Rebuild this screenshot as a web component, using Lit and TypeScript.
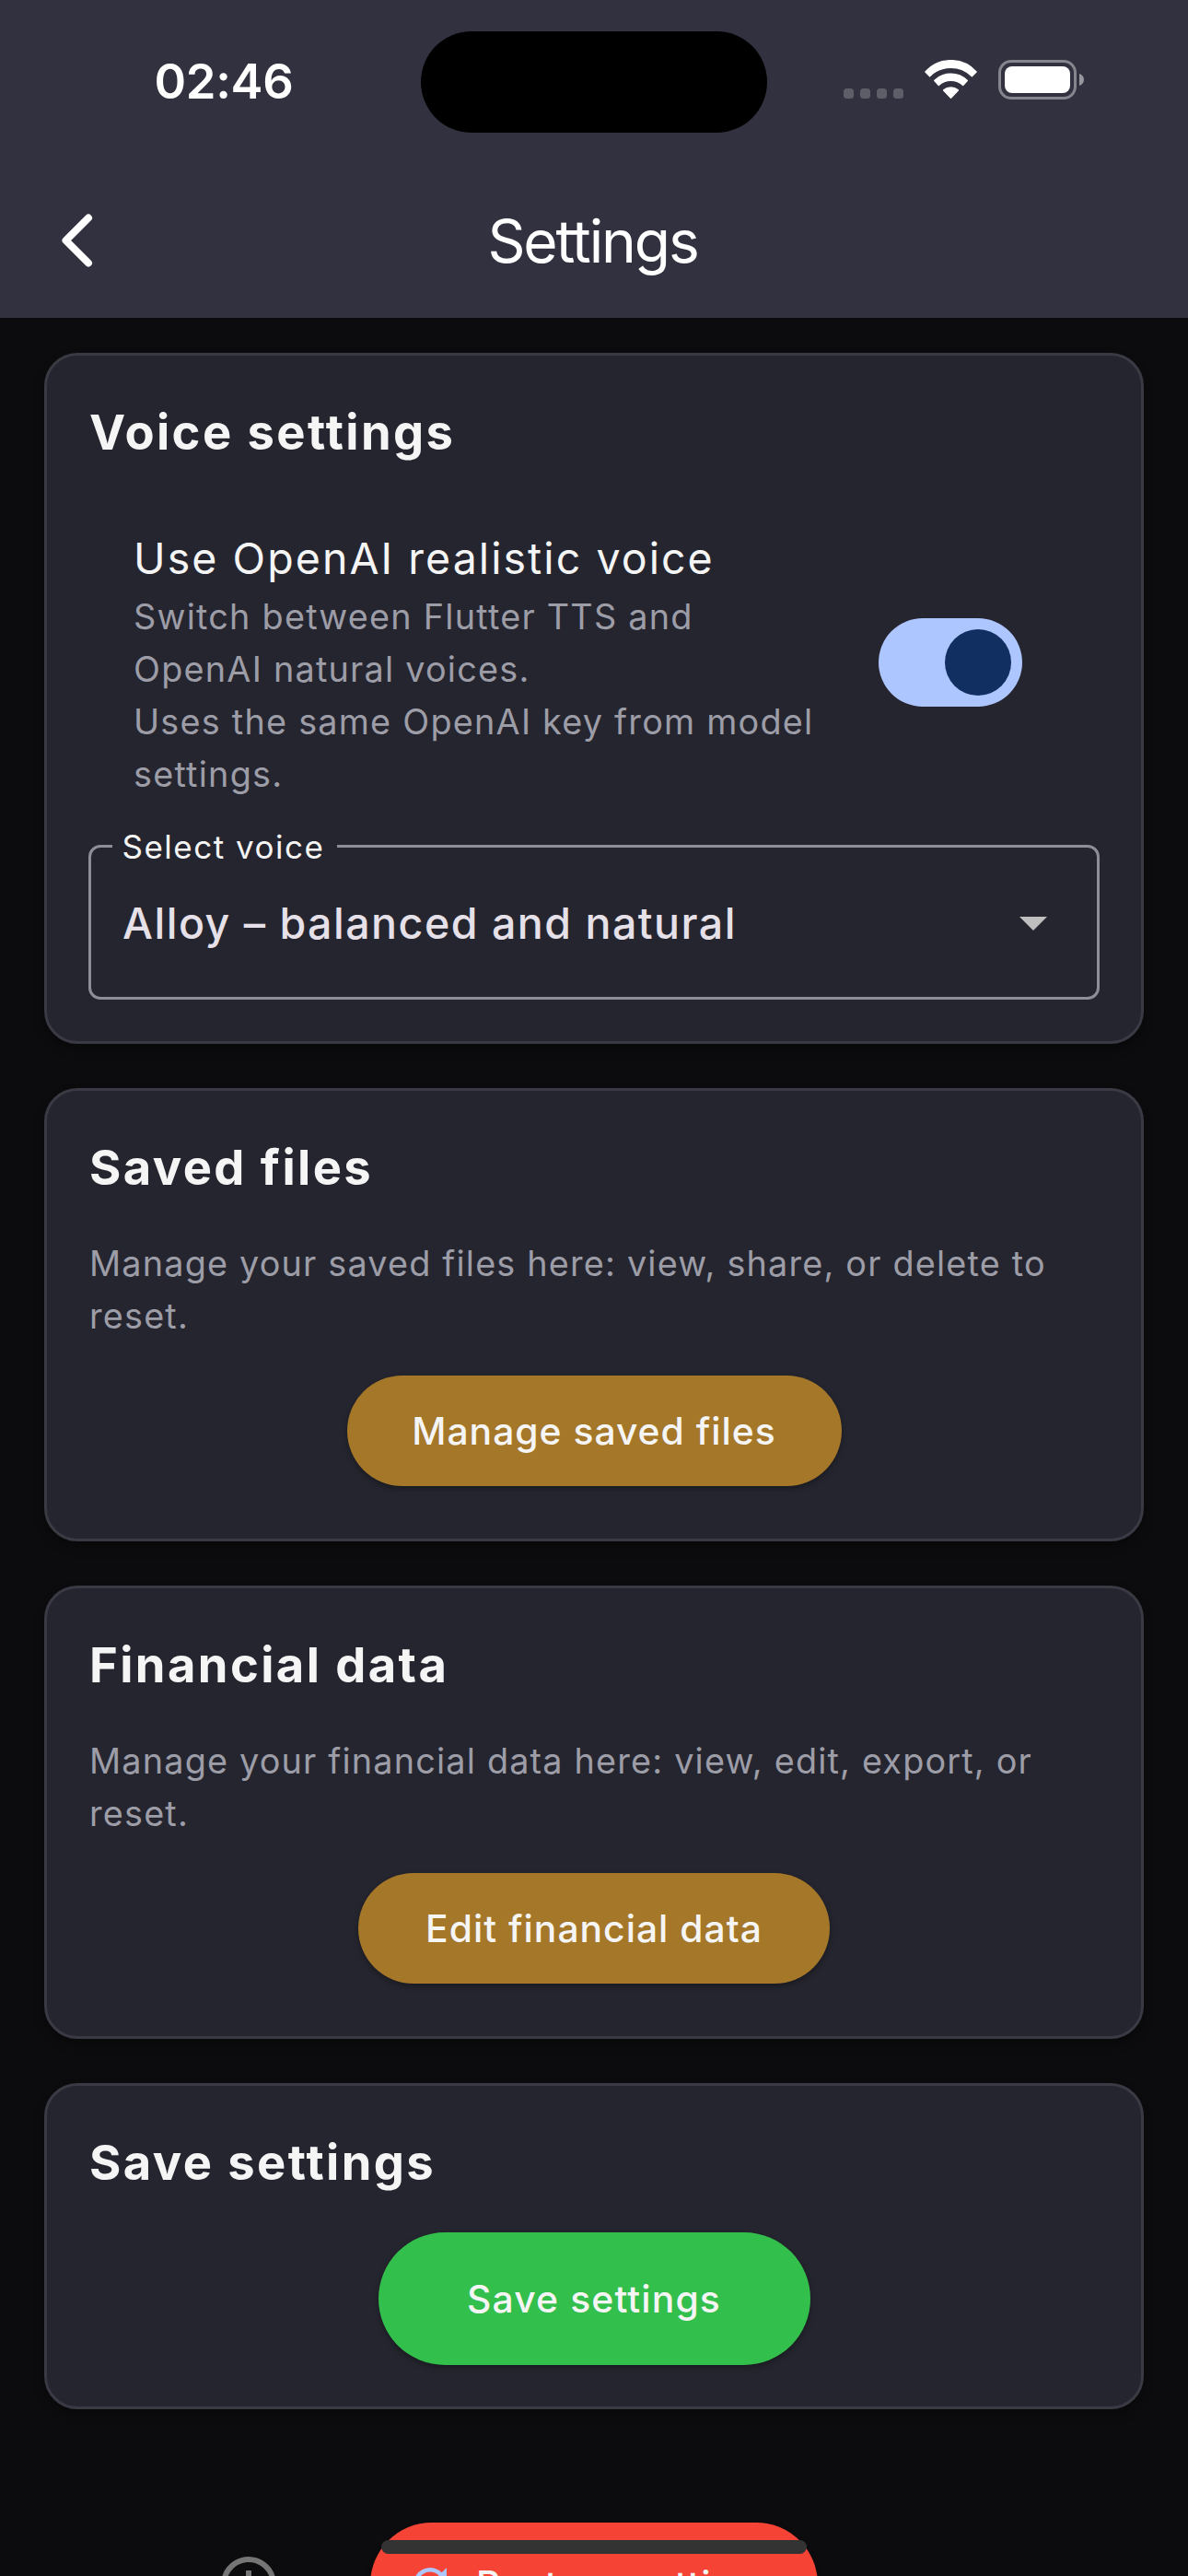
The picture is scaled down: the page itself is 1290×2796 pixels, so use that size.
import { LitElement, html, css, svg } from "lit";
import { customElement, property } from "lit/decorators.js";

const BASE_FONT = css`
  :host {
    font-family: Inter, Roboto, "Liberation Sans", sans-serif;
    box-sizing: border-box;
  }
  *, *::before, *::after { box-sizing: border-box; }
`;

@customElement("status-bar")
export class StatusBar extends LitElement {
  static styles = [BASE_FONT, css`
    :host { display: block; height: 177px; }
    .row {
      height: 177px;
      display: grid;
      grid-template-columns: 457px 376px 457px;
      align-items: center;
    }
    .time {
      padding-left: 29px;
      margin-top: -2px;
      text-align: center;
      color: #fff;
      font-size: 52.5px;
      line-height: 60px;
      font-weight: 600;
      letter-spacing: -0.3px;
    }
    .island { height: 110px; margin-top: 1px; border-radius: 55px; background: #000; }
    .icons {
      display: flex;
      align-items: flex-end;
      height: 43px;
      padding-left: 83px;
      margin-top: -4px;
    }
    .dots { display: flex; gap: 7px; padding-bottom: 1px; margin-right: 23px; }
    .dot { width: 11px; height: 11px; border-radius: 3.5px; background: #5e5e69; }
    svg { display: block; flex: none; }
    .wifi { margin-right: 23px; }
  `];

  render() {
    return html`
      <div class="row">
        <div class="time">02:46</div>
        <div class="island"></div>
        <div class="icons">
          <div class="dots">
            <span class="dot"></span><span class="dot"></span><span class="dot"></span><span class="dot"></span>
          </div>
          <svg class="wifi" width="57" height="43" viewBox="0 0 57 43" fill="#fff" stroke="#fff"
               stroke-width="1.4" stroke-linejoin="round">
            <path d="M0.900 13A37 37 0 0 1 56.100 13L51.400 17.700A32.500 32.500 0 0 0 5.600 17.700Z"/>
            <path d="M10.700 22.600A25.400 25.400 0 0 1 46.300 22.600L41.700 27.400A19.500 19.500 0 0 0 15.300 27.400Z"/>
            <path d="M20.600 32.900A12 12 0 0 1 36.400 32.900L28.500 41.300Z"/>
          </svg>
          <svg class="battery" width="93" height="43" viewBox="0 0 93 43">
            <rect x="1.500" y="1.500" width="82" height="40" rx="12.500" fill="none" stroke="#85858e" stroke-width="3"/>
            <rect x="7" y="7" width="71" height="29" rx="8" fill="#fff"/>
            <path d="M88 15v13c3-.9 5-3.500 5-6.500s-2-5.600-5-6.500z" fill="#97979e"/>
          </svg>
        </div>
      </div>
    `;
  }
}

@customElement("nav-bar")
export class NavBar extends LitElement {
  @property() heading = "";

  static styles = [BASE_FONT, css`
    :host { display: block; }
    .row {
      height: 168px;
      display: grid;
      grid-template-columns: 168px 1fr 168px;
      align-items: center;
      justify-items: center;
    }
    .title {
      color: #fff;
      font-size: 64px;
      line-height: 78px;
      font-weight: 400;
      letter-spacing: -2.1px;
      padding-top: 2px;
      padding-right: 3px;
    }
    svg { display: block; }
  `];

  render() {
    return html`
      <div class="row">
        <svg width="40" height="64" viewBox="0 0 40 64" fill="none" stroke="#fff" stroke-width="8"
             stroke-linecap="round" stroke-linejoin="round">
          <path d="M32 7.500 7.500 32 32 56.500"/>
        </svg>
        <div class="title">${this.heading}</div>
        <span></span>
      </div>
    `;
  }
}

@customElement("settings-card")
export class SettingsCard extends LitElement {
  @property() heading = "";

  static styles = [BASE_FONT, css`
    :host { display: block; }
    .card {
      background: #25252f;
      border: 3px solid #3a3a44;
      border-radius: 36px;
      padding: 47px 45px 45px;
      box-shadow: 0 6px 12px rgba(0, 0, 0, 0.3);
      height: 100%;
    }
    .heading {
      margin: 0 0 0 1px;
      color: #f5f5f5;
      font-size: 52.500px;
      line-height: 72px;
      font-weight: 700;
      letter-spacing: 2.400px;
    }
  `];

  render() {
    return html`
      <section class="card">
        <h2 class="heading">${this.heading}</h2>
        <slot></slot>
      </section>
    `;
  }
}

@customElement("pill-button")
export class PillButton extends LitElement {
  @property({ reflect: true }) tone = "amber";

  static styles = [BASE_FONT, css`
    :host { display: inline-flex; }
    .pill {
      display: flex;
      align-items: center;
      justify-content: center;
      width: 100%;
      height: 100%;
      border-radius: 72px;
      color: #f5f5f5;
      font-size: 40.800px;
      line-height: 60px;
      font-weight: 500;
      letter-spacing: 1px;
      white-space: nowrap;
      box-shadow: 0 3px 6px rgba(0, 0, 0, 0.3);
    }
    :host([tone="amber"]) .pill { background: #a57729; }
    :host([tone="green"]) .pill { background: #32bf4c; letter-spacing: 1.150px; }
    :host([tone="red"]) .pill { background: #f54436; justify-content: flex-start; padding-left: 38px; gap: 23px; }
  `];

  render() {
    return html`<div class="pill" role="button"><slot name="icon"></slot><slot></slot></div>`;
  }
}

const refreshIcon = svg`<path d="M17.650 6.350C16.200 4.900 14.210 4 12 4c-4.420 0-7.990 3.580-7.990 8s3.570 8 7.990 8c3.730 0 6.840-2.550 7.730-6h-2.080c-.82 2.330-3.040 4-5.650 4-3.310 0-6-2.690-6-6s2.690-6 6-6c1.660 0 3.140.69 4.220 1.780L13 11h7V4z"/>`;
const infoIcon = svg`<path d="M11 7h2v2h-2zm0 4h2v6h-2zm1-9C6.480 2 2 6.480 2 12s4.480 10 10 10 10-4.480 10-10S17.520 2 12 2zm0 18c-4.410 0-8-3.590-8-8s3.590-8 8-8 8 3.590 8 8-3.590 8-8 8z"/>`;

@customElement("app-root")
export class AppRoot extends LitElement {
  static styles = [BASE_FONT, css`
    :host {
      display: block;
      position: relative;
      width: 1290px;
      height: 2796px;
      overflow: hidden;
      background: #0c0c0e;
    }
    .top { background: #31313f; height: 345px; }
    .list {
      display: flex;
      flex-direction: column;
      gap: 48px;
      padding: 38px 48px 0;
    }
    .voice { height: 750px; }
    .standard { height: 492px; }
    .save { height: 354px; }

    .toggle-row {
      display: flex;
      align-items: center;
      justify-content: space-between;
      margin-top: 71px;
      padding: 0 84px 0 49px;
    }
    .toggle-title {
      color: #f5f5f5;
      font-size: 46.500px;
      line-height: 60px;
      letter-spacing: 2.060px;
    }
    .sub {
      color: #9d9da8;
      font-size: 37.800px;
      line-height: 57px;
      letter-spacing: 1.230px;
      white-space: nowrap;
    }
    .toggle-sub { margin-top: 5px; }
    .switch {
      flex: none;
      display: flex;
      align-items: center;
      justify-content: flex-end;
      width: 156px;
      height: 96px;
      padding: 12px;
      margin-bottom: 8px;
      border-radius: 48px;
      background: #adc6ff;
    }
    .thumb { width: 72px; height: 72px; border-radius: 50%; background: #112f60; }

    .select {
      position: relative;
      display: flex;
      align-items: center;
      justify-content: space-between;
      height: 168px;
      margin-top: 48px;
      padding: 0 54px 0 34px;
      border: 3px solid #8e8e98;
      border-radius: 13px;
    }
    .select-label {
      position: absolute;
      left: 23px;
      top: -28px;
      width: 244px;
      padding-left: 10.500px;
      background: #25252f;
      color: #f5f5f5;
      font-size: 35px;
      line-height: 54px;
      letter-spacing: 1.500px;
      white-space: nowrap;
    }
    .select-value {
      color: #e6e0e9;
      font-size: 46.500px;
      line-height: 60px;
      font-weight: 500;
      letter-spacing: 1.500px;
      padding-top: 1px;
    }
    svg { display: block; flex: none; }
    .caret { margin-top: 3px; }

    .desc { margin-top: 40px; padding-left: 1px; letter-spacing: 1.180px; }
    .action { display: flex; justify-content: center; }
    .action.files { margin-top: 36px; }
    .action.commit { margin-top: 40px; }
    .files-btn { width: 537px; height: 120px; }
    .data-btn { width: 512px; height: 120px; }
    .save-btn { width: 469px; height: 144px; }

    .footer {
      display: flex;
      align-items: center;
      gap: 96px;
      height: 134px;
      margin-top: 74.500px;
      padding-left: 186px;
    }
    .restore-btn { width: 486px; height: 134px; }
    .home-indicator {
      position: absolute;
      left: 414px;
      top: 2757px;
      width: 462px;
      height: 15px;
      border-radius: 8px;
      background: #333;
    }
  `];

  render() {
    return html`
      <header class="top">
        <status-bar></status-bar>
        <nav-bar heading="Settings"></nav-bar>
      </header>
      <main class="list">
        <settings-card class="voice" heading="Voice settings">
          <div class="toggle-row">
            <div>
              <div class="toggle-title">Use OpenAI realistic voice</div>
              <div class="sub toggle-sub">
                Switch between Flutter TTS and<br>OpenAI natural voices.<br>Uses the same OpenAI key from model<br>settings.
              </div>
            </div>
            <div class="switch" role="switch" aria-checked="true"><span class="thumb"></span></div>
          </div>
          <div class="select">
            <span class="select-label">Select voice</span>
            <span class="select-value">Alloy – balanced and natural</span>
            <svg class="caret" width="30" height="15" viewBox="0 0 30 15" fill="#bfbfbf"><path d="M0 0h30L15 15z"/></svg>
          </div>
        </settings-card>

        <settings-card class="standard" heading="Saved files">
          <div class="sub desc">Manage your saved files here: view, share, or delete to<br>reset.</div>
          <div class="action files"><pill-button class="files-btn" tone="amber">Manage saved files</pill-button></div>
        </settings-card>

        <settings-card class="standard" heading="Financial data">
          <div class="sub desc">Manage your financial data here: view, edit, export, or<br>reset.</div>
          <div class="action files"><pill-button class="data-btn" tone="amber">Edit financial data</pill-button></div>
        </settings-card>

        <settings-card class="save" heading="Save settings">
          <div class="action commit"><pill-button class="save-btn" tone="green">Save settings</pill-button></div>
        </settings-card>

        <div class="footer">
          <svg width="72" height="72" viewBox="0 0 24 24" fill="#757575">${infoIcon}</svg>
          <pill-button class="restore-btn" tone="red">
            <svg slot="icon" width="54" height="54" viewBox="0 0 24 24" fill="#adc6ff">${refreshIcon}</svg>
            Restore settings
          </pill-button>
        </div>
      </main>
      <div class="home-indicator"></div>
    `;
  }
}
